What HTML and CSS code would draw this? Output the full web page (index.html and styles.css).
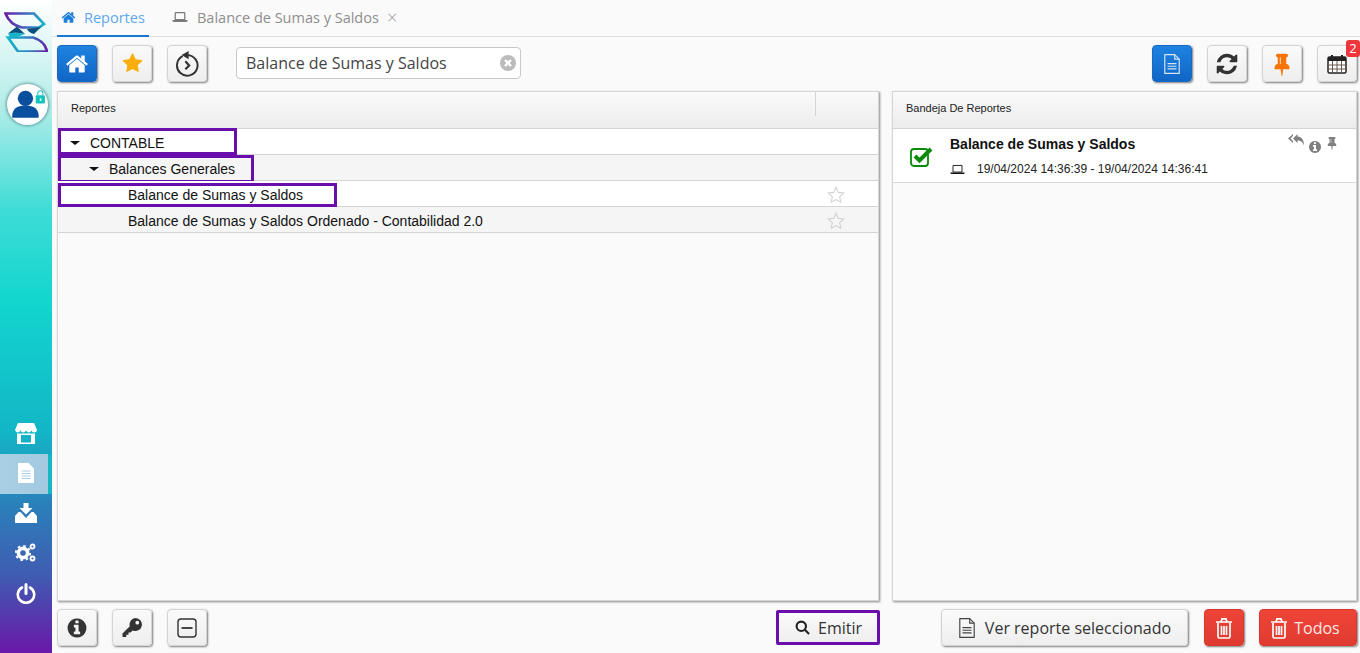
FILE: index.html
```html
<!DOCTYPE html>
<html lang="es">
<head>
<meta charset="utf-8">
<title>Reportes</title>
<link rel="stylesheet" href="styles.css">
</head>
<body>
<svg class="defs" width="0" height="0">
  <defs>
    <symbol id="i-home" viewBox="0 0 1792 1792"><path d="M1472 992v480q0 26-19 45t-45 19h-384v-384h-256v384h-384q-26 0-45-19t-19-45v-480q0-1 .5-3t.5-3l575-474 575 474q1 2 1 6zm223-69l-62 74q-8 9-21 11h-3q-13 0-21-7l-692-577-692 577q-12 8-24 7-13-2-21-11l-62-74q-8-10-7-23.500t11-21.500l719-599q32-26 76-26t76 26l244 204v-195q0-14 9-23t23-9h192q14 0 23 9t9 23v408l219 182q10 8 11 21.500t-7 23.500z"/></symbol>
    <symbol id="i-star" viewBox="0 0 1792 1792"><path d="M1728 647q0 22-26 48l-363 354 86 500q1 7 1 20 0 21-10.500 35.500t-30.500 14.500q-19 0-40-12l-449-236-449 236q-22 12-40 12-21 0-31.500-14.500t-10.500-35.500q0-6 2-20l86-500-364-354q-25-27-25-48 0-37 56-46l502-73 225-455q19-41 49-41t49 41l225 455 502 73q56 9 56 46z"/></symbol>
    <symbol id="i-refresh" viewBox="0 0 1792 1792"><path d="M1639 1056q0 5-1 7-64 268-268 434.500t-478 166.500q-146 0-282.500-55t-243.500-157l-129 129q-19 19-45 19t-45-19-19-45v-448q0-26 19-45t45-19h448q26 0 45 19t19 45-19 45l-137 137q71 66 161 102t187 36q134 0 250-65t186-179q11-17 53-117 8-23 30-23h192q13 0 22.500 9.500t9.500 22.500zm25-800v448q0 26-19 45t-45 19h-448q-26 0-45-19t-19-45 19-45l138-138q-148-137-349-137-134 0-250 65t-186 179q-11 17-53 117-8 23-30 23h-199q-13 0-22.500-9.500t-9.500-22.500v-7q65-268 270-434.500t480-166.500q146 0 284 55.500t245 156.500l130-129q19-19 45-19t45 19 19 45z"/></symbol>
    <symbol id="i-pin" viewBox="0 0 1152 1792"><path d="M480 864v-448q0-14-9-23t-23-9-23 9-9 23v448q0 14 9 23t23 9 23-9 9-23zm672 352q0 26-19 45t-45 19h-429l-51 483q-2 12-10.500 20.500t-20.500 8.500h-1q-27 0-32-27l-76-485h-404q-26 0-45-19t-19-45q0-123 78.500-221.500t177.500-98.500v-512q-52 0-90-38t-38-90 38-90 90-38h640q52 0 90 38t38 90-38 90-90 38v512q99 0 177.500 98.500t78.500 221.500z"/></symbol>
    <symbol id="i-info" viewBox="0 0 1792 1792"><path d="M1152 1376v-160q0-14-9-23t-23-9h-96v-512q0-14-9-23t-23-9h-320q-14 0-23 9t-9 23v160q0 14 9 23t23 9h96v320h-96q-14 0-23 9t-9 23v160q0 14 9 23t23 9h448q14 0 23-9t9-23zm-128-896v-160q0-14-9-23t-23-9h-192q-14 0-23 9t-9 23v160q0 14 9 23t23 9h192q14 0 23-9t9-23zm640 416q0 209-103 385.500t-279.500 279.500-385.500 103-385.500-103-279.500-279.500-103-385.500 103-385.500 279.500-279.500 385.500-103 385.500 103 279.500 279.500 103 385.500z"/></symbol>
    <symbol id="i-laptop" viewBox="0 0 20 14"><path fill="none" stroke="currentColor" stroke-width="1.200" d="M4 1.600h12v8.800H4z"/><path fill="currentColor" d="M.5 11h19v.6l-1 1.400h-17l-1-1.400z"/></symbol>
    <symbol id="i-doc" viewBox="0 0 20 24"><path fill="none" stroke="currentColor" stroke-width="1.300" stroke-linejoin="round" d="M2 1.500h11l5 5v16H2z"/><path fill="none" stroke="currentColor" stroke-width="1.300" d="M13 1.500v5h5M5 11.500h10M5 14.500h10M5 17.500h10"/></symbol>
    <symbol id="i-trash" viewBox="0 0 18 22"><path fill="none" stroke="currentColor" stroke-width="1.700" d="M3 6v13.500q0 1.500 1.500 1.500h9q1.500 0 1.500-1.500V6M1 5h16M6 5l1-3.200h4L12 5M6.500 9v9M9 9v9M11.500 9v9"/></symbol>
  </defs>
</svg>

<aside class="sidebar">
  <svg class="logo" viewBox="0 0 44 40" width="44" height="40">
    <defs>
      <linearGradient id="lg" x1="0" y1="0" x2="1" y2="0"><stop offset="0" stop-color="#6a1fa8"/><stop offset=".6" stop-color="#3f6fc0"/><stop offset="1" stop-color="#16b4c8"/></linearGradient>
      <linearGradient id="lg2" x1="0" y1="0" x2="1" y2="0"><stop offset="0" stop-color="#16b4c8"/><stop offset=".5" stop-color="#2f86c4"/><stop offset="1" stop-color="#6a1fa8"/></linearGradient>
    </defs>
    <path d="M1.500 1.500H30L40 12l-5 3.500H18Q6 13 1.500 1.500z" fill="none" stroke="url(#lg)" stroke-width="2.700"/>
    <path d="M4 25.500h25Q41 29 43 39.500H14z" fill="none" stroke="url(#lg2)" stroke-width="2.700"/>
    <path d="M4 21.500l9-7 8 7.500q-9-2-17-.5zM23 17l14-2-7 7q-5-1-7-5z" fill="#0c4f7e"/>
    <path d="M4 21.500q9-1.500 17 .5l-8 3H6z" fill="#16b4c8"/>
  </svg>
  <div class="avatar">
    <svg viewBox="0 0 40 40" width="41" height="41">
      <circle cx="18" cy="14" r="7.500" fill="#0a4f9e"/>
      <path d="M5 32q0-11 13-11t13 11q0 1-1 1H6q-1 0-1-1z" fill="#0a4f9e"/>
      <rect x="28" y="11" width="9" height="8" rx="1" fill="#12c4bd"/>
      <path d="M30 11V9q0-2.500 2.500-2.500T35 9v2" fill="none" stroke="#12c4bd" stroke-width="1"/>
      <rect x="32" y="14" width="1.500" height="2.500" fill="#fff"/>
    </svg>
  </div>
  <nav class="side-nav">
    <a class="side-item">
      <svg viewBox="0 0 22 22" width="22" height="22"><path d="M3 1h16l3 7q-.5 2.500-2.750 2.500T16.500 8.500Q15.500 10.500 13.750 10.500T11 8.500q-1 2-2.750 2T5.500 8.500Q4.500 10.500 2.750 10.500T0 8z" fill="#fff"/><path fill-rule="evenodd" d="M2 11.500h18V22H2zM6 13v7.500h10V13z" fill="#fff"/></svg>
    </a>
    <a class="side-item is-active">
      <svg viewBox="0 0 16 20" width="16" height="20"><path d="M0 0h10.500L16 5.500V20H0z" fill="#fff"/><path d="M3.500 8h9M3.500 10.500h9M3.500 13h9M3.500 15.500h9" stroke="#a9cfe4" stroke-width="1.200"/></svg>
    </a>
    <a class="side-item">
      <svg viewBox="0 0 22 20" width="22" height="20"><path d="M8.500 0h5v5h4L11 11.500 4.500 5h4z" fill="#fff"/><path d="M0 13l3.500-4h2L11 15l5.500-6h2l3.500 4v7H0z" fill="#fff"/></svg>
    </a>
    <a class="side-item">
      <svg viewBox="0 0 21 20" width="21" height="20"><g fill="none" stroke="#fff"><circle cx="8" cy="10" r="4.600" stroke-width="3.600"/><circle cx="8" cy="10" r="7.200" stroke-width="1.800" stroke-dasharray="2.600 3.050"/><circle cx="17.500" cy="3.500" r="2" stroke-width="1.800"/><circle cx="17.500" cy="15.500" r="2" stroke-width="1.800"/></g></svg>
    </a>
    <a class="side-item">
      <svg viewBox="0 0 20 21" width="20" height="21"><path d="M6 4.500a8.200 8.200 0 1 0 8 0" fill="none" stroke="#fff" stroke-width="2.600" stroke-linecap="round"/><path d="M10 1.500v9" stroke="#fff" stroke-width="3" stroke-linecap="round"/></svg>
    </a>
  </nav>
</aside>

<main class="main">
  <header class="tabs">
    <div class="tab is-current">
      <svg class="tab-icon" width="15" height="15"><use href="#i-home"/></svg>
      <span>Reportes</span>
    </div>
    <div class="tab">
      <svg class="tab-icon laptop" width="16" height="12"><use href="#i-laptop"/></svg>
      <span>Balance de Sumas y Saldos</span>
      <span class="tab-close">×</span>
    </div>
  </header>

  <section class="toolbar">
    <div class="btn-group">
      <button class="icon-btn primary"><svg width="24" height="24" fill="#fff"><use href="#i-home"/></svg></button>
      <button class="icon-btn"><svg width="21" height="21" fill="#f9ae0c"><use href="#i-star"/></svg></button>
      <button class="icon-btn">
        <svg viewBox="0 0 24 24" width="26" height="26" fill="none" stroke="#333" stroke-width="1.800"><path d="M8 4.800A9.500 9.500 0 1 0 12 3.800"/><path d="M13.500 0L7 3.800l6.500 3.800z" fill="#333" stroke="none"/><path d="M10.500 9.500l3.500 3.800-3.500 3.500" stroke-width="2"/></svg>
      </button>
      <div class="search">
        <span class="search-text">Balance de Sumas y Saldos</span>
        <svg class="search-clear" viewBox="0 0 16 16" width="16" height="16"><circle cx="8" cy="8" r="8" fill="#bbb"/><path d="M5 5l6 6M11 5l-6 6" stroke="#fff" stroke-width="2.400"/></svg>
      </div>
    </div>
    <div class="btn-group">
      <button class="icon-btn primary"><svg width="18" height="24" color="#d4e8fb" viewBox="0 0 20 24"><use href="#i-doc"/></svg></button>
      <button class="icon-btn"><svg width="24" height="24" fill="#333"><use href="#i-refresh"/></svg></button>
      <button class="icon-btn"><svg width="16" height="24" fill="#f97406" viewBox="0 0 1152 1792"><use href="#i-pin"/></svg></button>
      <button class="icon-btn has-badge">
        <svg viewBox="0 0 20 20" width="20" height="20"><rect x="1" y="3" width="18" height="16" rx="1.500" fill="#fff" stroke="#222" stroke-width="1.500"/><path d="M1 3h18v4H1z" fill="#222"/><path d="M5 1v4M15 1v4" stroke="#222" stroke-width="2"/><path d="M1 11h18M1 15h18M5.500 7v12M10 7v12M14.500 7v12" stroke="#6b5a4a" stroke-width="1"/></svg>
        <span class="badge">2</span>
      </button>
    </div>
  </section>

  <section class="panels">
    <div class="panel panel-left">
      <div class="panel-head">
        <span class="head-title">Reportes</span>
        <span class="head-sep"></span>
      </div>
      <div class="rows">
        <div class="row lvl0">
          <span class="caret"></span><span>CONTABLE</span>
          <span class="mark mark-a"></span>
        </div>
        <div class="row lvl1 alt">
          <span class="caret"></span><span>Balances Generales</span>
          <span class="mark mark-b"></span>
        </div>
        <div class="row lvl2">
          <span>Balance de Sumas y Saldos</span>
          <svg class="fav" viewBox="0 0 20 20" width="18" height="18"><path d="M10 1.500l2.600 5.600 6 .7-4.500 4.100 1.200 6L10 15l-5.300 2.900 1.200-6L1.400 7.800l6-.7z" fill="none" stroke="#d2d2d2" stroke-width="1.200"/></svg>
          <span class="mark mark-c"></span>
        </div>
        <div class="row lvl2 alt">
          <span>Balance de Sumas y Saldos Ordenado - Contabilidad 2.0</span>
          <svg class="fav" viewBox="0 0 20 20" width="18" height="18"><path d="M10 1.500l2.600 5.600 6 .7-4.500 4.100 1.200 6L10 15l-5.300 2.900 1.200-6L1.400 7.800l6-.7z" fill="none" stroke="#d2d2d2" stroke-width="1.200"/></svg>
        </div>
      </div>
    </div>

    <div class="panel panel-right">
      <div class="panel-head">
        <span class="head-title">Bandeja De Reportes</span>
      </div>
      <article class="report">
        <svg class="report-check" viewBox="0 0 24 22" width="24" height="22"><rect x="1" y="4" width="17" height="17" rx="3" fill="none" stroke="#0b8a0b" stroke-width="1.800"/><path d="M5 11l4.500 4.500L21 4" fill="none" stroke="#0b8a0b" stroke-width="4"/></svg>
        <div class="report-body">
          <div class="report-title">Balance de Sumas y Saldos</div>
          <div class="report-meta">
            <svg width="15" height="11" color="#111"><use href="#i-laptop"/></svg>
            <span>19/04/2024 14:36:39 - 19/04/2024 14:36:41</span>
          </div>
        </div>
        <div class="report-actions">
          <svg class="act-reply" viewBox="0 0 16 13" width="16" height="13"><path d="M5 0v2L2.500 4.500 5 7v2L0 4.500zM9.500 0v2.500c4.500 0 6.500 4 6.500 9-1.500-3.500-3-5-6.500-5V9L5 4.500z" fill="#808080"/></svg>
          <svg class="act-info" width="14" height="14" fill="#808080"><use href="#i-info"/></svg>
          <svg class="act-pin" width="10" height="14" viewBox="0 0 1152 1792" fill="#808080"><use href="#i-pin"/></svg>
        </div>
      </article>
    </div>
  </section>

  <footer class="actions">
    <div class="actions-left">
      <div class="btn-group">
        <button class="icon-btn"><svg width="22" height="22" fill="#333"><use href="#i-info"/></svg></button>
        <button class="icon-btn">
          <svg viewBox="0 0 22 22" width="22" height="22"><path fill="#333" fill-rule="evenodd" d="M14.500 1a6.500 6.500 0 1 1-2.800 12.400L9.500 15.600H7.500v2.200H5.300V20H1.500v-3.500l7.300-7.300A6.500 6.500 0 0 1 14.500 1zm1.800 2.800a1.900 1.900 0 1 0 0 3.800 1.900 1.900 0 0 0 0-3.800z"/></svg>
        </button>
        <button class="icon-btn">
          <svg viewBox="0 0 20 20" width="20" height="20" fill="none" stroke="#333" stroke-width="1.400"><rect x="1" y="1" width="18" height="18" rx="3"/><path d="M4.500 10h11" stroke-width="1.800"/></svg>
        </button>
      </div>
      <button class="text-btn emit">
        <svg viewBox="0 0 16 16" width="15" height="15" fill="none" stroke="#222" stroke-width="2.300"><circle cx="6.700" cy="6.700" r="5"/><path d="M10.500 10.500l4.500 4.500"/></svg>
        <span>Emitir</span>
      </button>
    </div>
    <div class="actions-right">
      <button class="text-btn view">
        <svg width="18" height="22" color="#444" viewBox="0 0 20 24"><use href="#i-doc"/></svg>
        <span>Ver reporte seleccionado</span>
      </button>
      <button class="icon-btn danger"><svg width="18" height="22" color="#fff" viewBox="0 0 18 22"><use href="#i-trash"/></svg></button>
      <button class="text-btn danger todos">
        <svg width="18" height="22" color="#fff" viewBox="0 0 18 22"><use href="#i-trash"/></svg>
        <span>Todos</span>
      </button>
    </div>
  </footer>
</main>
</body>
</html>
```
FILE: styles.css
```css
* { box-sizing: border-box; }
html, body { margin: 0; height: 100%; overflow: hidden; }
body {
  display: flex;
  width: 1360px;
  height: 653px;
  background: #fafafa;
  font-family: "Liberation Sans", Arial, sans-serif;
  color: #111;
}
.defs { position: absolute; }
svg { flex: none; }

/* sidebar */
.sidebar {
  width: 52px;
  flex: none;
  display: flex;
  flex-direction: column;
  background: linear-gradient(180deg, #ffffff 0%, #b4ede9 16%, #3fdcd6 32%, #12d6cf 46%, #12b6c6 66%, #2c7db9 78%, #3f5cb2 88%, #6a18a8 100%);
}
.logo { display: block; margin: 12px 0 0 4px; }
.avatar {
  width: 41px;
  height: 41px;
  margin: 32px 0 0 7px;
  border-radius: 50%;
  background: #fff;
  box-shadow: 0 0 3px 1px rgba(0, 60, 70, .45);
}
.avatar svg { display: block; }
.side-nav { margin-top: 289px; display: flex; flex-direction: column; }
.side-item {
  height: 40px;
  width: 52px;
  display: flex;
  align-items: center;
  justify-content: center;
}
.side-item svg { margin: -2px 0 0 -1px; }
.side-item.is-active {
  background: linear-gradient(90deg, #a9cfe4 0, #a2c9e0 48px, #16b5c4 48px, #16b5c4 52px);
}

/* main */
.main { flex: 1; min-width: 0; display: flex; flex-direction: column; }

.tabs {
  height: 37px;
  flex: none;
  display: flex;
  gap: 8px;
  padding-left: 5px;
  border-bottom: 1px solid #dedede;
  font-family: "Open Sans", sans-serif;
  font-size: 14.5px;
  color: #8e8e8e;
}
.tab {
  height: 37px;
  display: flex;
  align-items: center;
  gap: 8px;
  padding: 0 16px 3px 4px;
}
.tab:first-child { width: 92px; padding-right: 0; }
.tab + .tab { padding-left: 15px; }
.tab.is-current { color: #5ea8ee; border-bottom: 2px solid #1976d2; padding-bottom: 1px; }
.tab-icon { fill: #1f7fdc; }
.tab-icon.laptop { color: #555; fill: none; margin-right: 1px; }
.tab-close { font-size: 18px; font-weight: 300; color: #9a9a9a; line-height: 1; }

.toolbar {
  height: 54px;
  flex: none;
  display: flex;
  justify-content: space-between;
  align-items: flex-start;
  padding: 8px 3px 0 5px;
}
.btn-group { display: flex; gap: 15px; align-items: flex-start; }
.icon-btn {
  position: relative;
  width: 40px;
  height: 37px;
  padding: 0;
  display: flex;
  align-items: center;
  justify-content: center;
  border: 1px solid #d4d4d4;
  border-radius: 4px;
  background: linear-gradient(180deg, #fafafa, #eeeeee);
  box-shadow: 1px 1px 2px 0 rgba(0, 0, 0, .5);
}
.icon-btn.primary {
  background: linear-gradient(180deg, #1f82e0, #1066c6);
  border-color: #1769c2;
}
.icon-btn.danger {
  background: linear-gradient(180deg, #ef4438, #dd3a30);
  border-color: #d8372e;
}
.badge {
  position: absolute;
  top: -6px;
  right: -4px;
  width: 14px;
  height: 17px;
  border-radius: 3px;
  background: #f0353b;
  color: #fff;
  font: 13px/17px "Open Sans", sans-serif;
  text-align: center;
}
.has-badge svg { margin-left: -1px; }
.search {
  width: 285px;
  height: 32px;
  margin: 2px 0 0 14px;
  padding: 0 4px 0 9px;
  display: flex;
  align-items: center;
  justify-content: space-between;
  background: #fff;
  border: 1px solid #c8c8c8;
  border-radius: 4px;
  font-family: "Open Sans", sans-serif;
  font-size: 16px;
  color: #444;
}

/* panels */
.panels { height: 510px; flex: none; display: flex; gap: 13px; padding: 0 3px 0 5px; }
.panel {
  background: #fafafa;
  border: 1px solid #d6d6d6;
  box-shadow: 1px 1px 2px rgba(0, 0, 0, .45);
  display: flex;
  flex-direction: column;
}
.panel-left { width: 822px; }
.panel-right { flex: 1; min-width: 0; }
.panel-head {
  height: 37px;
  flex: none;
  display: flex;
  align-items: center;
  justify-content: space-between;
  padding: 0 0 5px 13px;
  border-bottom: 1px solid #d4d4d4;
  background: linear-gradient(180deg, #fafafa, #ececec);
  font-size: 11px;
  color: #222;
}
.head-sep { align-self: flex-start; width: 63px; height: 24px; border-left: 1px solid #d4d4d4; }

.row {
  position: relative;
  height: 26px;
  display: flex;
  align-items: center;
  padding-top: 2px;
  background: #fff;
  border-bottom: 1px solid #d4d4d4;
  font-size: 14px;
  color: #111;
}
.row.alt { background: #f5f5f5; }
.row.lvl0 { padding-left: 12px; }
.row.lvl1 { padding-left: 31px; }
.row.lvl2 { padding-left: 70px; }
.caret {
  width: 0;
  height: 0;
  margin-right: 10px;
  border-style: solid;
  border-width: 4.500px 5px 0;
  border-color: #111 transparent transparent;
}
.fav { position: absolute; left: 769px; top: 5px; }
.mark {
  position: absolute;
  left: 0;
  border: 3px solid #6a0dad;
  pointer-events: none;
}
.mark-a { top: -1px; width: 179px; height: 27px; }
.mark-b { top: 0; width: 196px; height: 28px; }
.mark-c { top: 2px; width: 279px; height: 24px; }

.report {
  position: relative;
  height: 54px;
  flex: none;
  display: flex;
  background: #fff;
  border-bottom: 1px solid #d8d8d8;
}
.report-check { margin: 16px 0 0 17px; }
.report-body { margin-left: 16px; }
.report-title { margin-top: 7px; font-size: 14px; font-weight: 700; line-height: 16px; color: #111; }
.report-meta { margin-top: 10px; display: flex; align-items: center; gap: 12px; font-size: 12px; line-height: 14px; color: #222; }
.report-actions { position: absolute; top: 5px; right: 19px; display: flex; align-items: flex-start; gap: 4px; }
.act-info { margin-top: 6px; }
.act-pin { margin: 2px 0 0 1px; }

/* footer */
.actions {
  flex: 1;
  display: flex;
  justify-content: space-between;
  align-items: flex-start;
  padding: 8px 3px 0 5px;
}
.actions-left { width: 823px; display: flex; justify-content: space-between; align-items: flex-start; }
.actions-right { display: flex; gap: 15px; align-items: flex-start; }
.text-btn {
  height: 37px;
  display: flex;
  align-items: center;
  justify-content: center;
  gap: 7px;
  padding: 0;
  border: 1px solid #d4d4d4;
  border-radius: 4px;
  background: linear-gradient(180deg, #fafafa, #eeeeee);
  box-shadow: 1px 1px 2px 0 rgba(0, 0, 0, .5);
  font-family: "Open Sans", sans-serif;
  font-size: 16px;
  color: #333;
}
.emit {
  width: 104px;
  height: 35px;
  margin-top: 1px;
  gap: 8px;
  padding-left: 1px;
  border: 3px solid #6a0dad;
  border-radius: 2px;
  box-shadow: none;
}
.view { width: 247px; gap: 9px; margin-right: 1px; }
.text-btn.danger {
  background: linear-gradient(180deg, #ef4438, #e03b31);
  border-color: #d8372e;
  color: #ffe9e6;
  width: 98px;
  gap: 6px;
  padding-right: 6px;
}
```
